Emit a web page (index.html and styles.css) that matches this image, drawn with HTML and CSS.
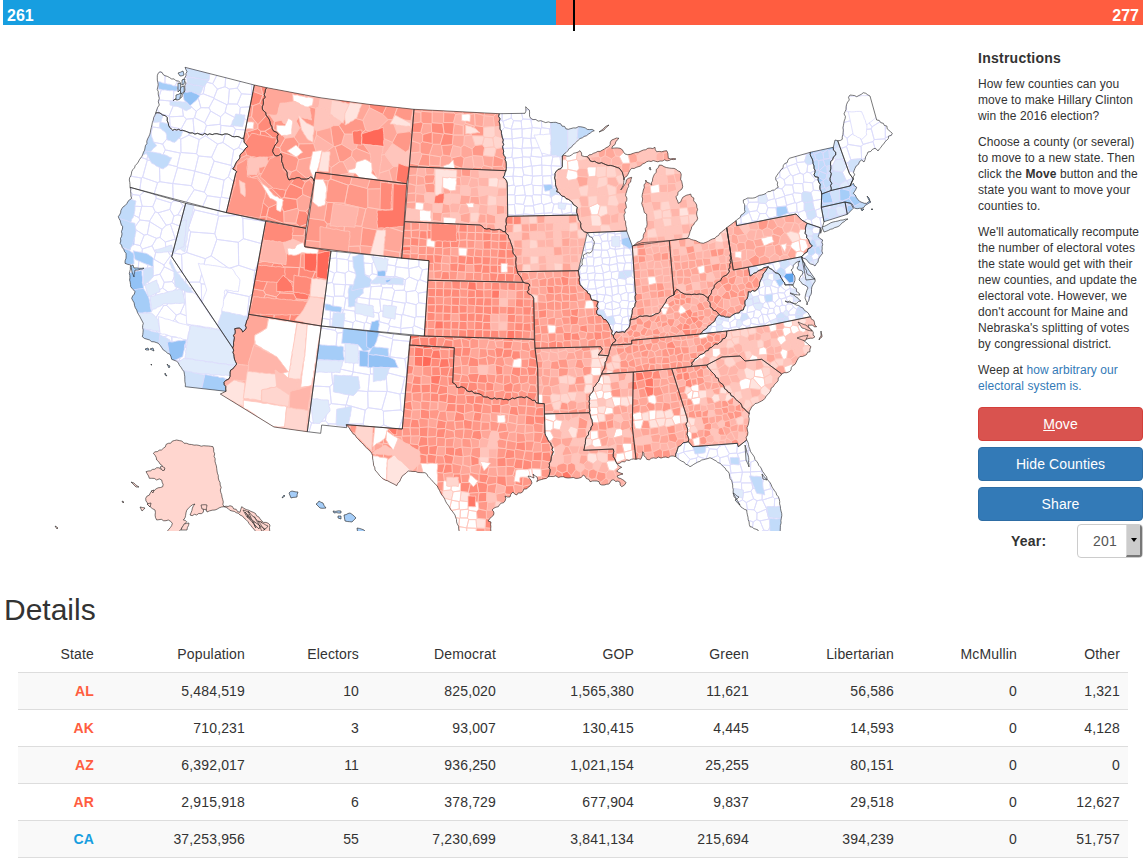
FILE: index.html
```html
<!DOCTYPE html>
<html lang="en">
<head>
<meta charset="utf-8">
<title>Electoral map</title>
<link rel="stylesheet" href="styles.css">
</head>
<body>
<header class="tally">
  <div class="tally-dem">261</div>
  <div class="tally-gop">277</div>
  <div class="tally-mid"></div>
</header>
<main class="top">
  <svg class="map" id="map" viewBox="0 31 970 500" width="970" height="500"></svg>
  <aside class="side">
    <h4>Instructions</h4>
    <p>How few counties can you<br>move to make Hillary Clinton<br>win the 2016 election?</p>
    <p>Choose a county (or several)<br>to move to a new state. Then<br>click the <b>Move</b> button and the<br>state you want to move your<br>counties to.</p>
    <p>We'll automatically recompute<br>the number of electoral votes<br>the state would get with their<br>new counties, and update the<br>electoral vote. However, we<br>don't account for Maine and<br>Nebraska's splitting of votes<br>by congressional district.</p>
    <p>Weep at <a>how arbitrary our<br>electoral system is.</a></p>
    <div class="buttons">
      <button class="btn btn-danger"><u>M</u>ove</button>
      <button class="btn">Hide Counties</button>
      <button class="btn">Share</button>
    </div>
    <div class="year">
      <b>Year:</b>
      <div class="select"><span>201</span><i class="arrow"></i></div>
    </div>
  </aside>
</main>
<section class="details">
  <h2>Details</h2>
  <table>
    <colgroup><col class="c1"><col class="c2"><col class="c3"><col class="c4"><col class="c5"><col class="c6"><col class="c7"><col class="c8"><col class="c9"></colgroup>
    <thead><tr><th>State</th><th>Population</th><th>Electors</th><th>Democrat</th><th>GOP</th><th>Green</th><th>Libertarian</th><th>McMullin</th><th>Other</th></tr></thead>
    <tbody>
      <tr><td class="gop">AL</td><td>5,484,519</td><td>10</td><td>825,020</td><td>1,565,380</td><td>11,621</td><td>56,586</td><td>0</td><td>1,321</td></tr>
      <tr><td class="gop">AK</td><td>710,231</td><td>3</td><td>93,007</td><td>130,415</td><td>4,445</td><td>14,593</td><td>0</td><td>4,128</td></tr>
      <tr><td class="gop">AZ</td><td>6,392,017</td><td>11</td><td>936,250</td><td>1,021,154</td><td>25,255</td><td>80,151</td><td>0</td><td>0</td></tr>
      <tr><td class="gop">AR</td><td>2,915,918</td><td>6</td><td>378,729</td><td>677,904</td><td>9,837</td><td>29,518</td><td>0</td><td>12,627</td></tr>
      <tr><td class="dem">CA</td><td>37,253,956</td><td>55</td><td>7,230,699</td><td>3,841,134</td><td>215,694</td><td>394,239</td><td>0</td><td>51,757</td></tr>
    </tbody>
  </table>
</section>
<script src="map.js"></script>
</body>
</html>
```
FILE: styles.css
```css
* { box-sizing: border-box; }
body { margin: 0; height: 867px; overflow: hidden; background: #fff; color: #333; font-family: "Liberation Sans", Arial, sans-serif; font-size: 14px; }
.tally { position: relative; display: flex; margin: 0 5px 0 3px; height: 25px; color: #fff; font-weight: bold; font-size: 16px; line-height: 31px; }
.tally-dem { width: 553px; padding-left: 4px; background: #179ee0; }
.tally-gop { flex: 1; padding-right: 4px; text-align: right; background: #ff5d40; }
.tally-mid { position: absolute; left: 570px; top: 0; width: 2px; height: 31px; background: #000; }
.top { display: flex; height: 565px; padding-top: 6px; }
.map { flex: none; display: block; }
.side { width: 165px; margin-left: 8px; padding-top: 19px; }
.side h4 { margin: 0 0 10px; font-size: 14px; line-height: 16px; letter-spacing: .25px; }
.side p { margin: 0 0 10px; font-size: 12px; line-height: 16px; letter-spacing: .08px; white-space: nowrap; }
.side a { color: #337ab7; }
.buttons { display: flex; flex-direction: column; gap: 6px; margin-top: 13px; }
.btn { height: 34px; padding: 0; border: 1px solid #2e6da4; border-radius: 4px; background: #337ab7; color: #fff; font: 14px "Liberation Sans", Arial, sans-serif; letter-spacing: .1px; }
.btn-danger { background: #d9534f; border-color: #d43f3a; }
.year { display: flex; justify-content: space-between; align-items: center; margin: 3px 0 0 33px; letter-spacing: .2px; }
.select { display: flex; width: 66px; height: 34px; border: 1px solid #ccc; border-radius: 4px; overflow: hidden; color: #555; line-height: 32px; }
.select span { flex: 1; padding-left: 15px; }
.arrow { display: flex; width: 16px; align-items: center; justify-content: center; background: #ccc; border-right: 2px solid #777; border-bottom: 2px solid #777; border-left: 1px solid #ddd; }
.arrow::before { content: ""; border: 3px solid transparent; border-top: 4px solid #000; border-bottom: 0; }
.details h2 { margin: 0 0 0 4px; font-size: 30px; font-weight: normal; line-height: 33px; padding-top: 3px; }
table { width: 1110px; margin: 10px 0 0 18px; border-collapse: separate; border-spacing: 0; table-layout: fixed; }
th, td { height: 37px; padding: 0 8px; text-align: right; font-weight: normal; line-height: 20px; letter-spacing: .15px; }
td { border-top: 1px solid #ddd; }
th { height: 36px; }
tbody tr:nth-child(odd) { background: #f9f9f9; }
tbody tr:last-child td { border-bottom: 1px solid #ddd; height: 38px; }
td.gop { color: #ff5d40; font-weight: bold; }
td.dem { color: #179ee0; font-weight: bold; }
.c1 { width: 84px; } .c2 { width: 151px; } .c3 { width: 114px; } .c4 { width: 137px; } .c5 { width: 138px; }
.c6 { width: 115px; } .c7 { width: 145px; } .c8 { width: 123px; } .c9 { width: 103px; }
.state { fill: none; stroke: #222; stroke-opacity: .6; stroke-width: 1; stroke-linejoin: round; }
.county-r { stroke: #ffc6bd; stroke-width: .8; }
.county-b { stroke: #dcdcfb; stroke-width: .85; }
```
FILE: map.js
```js
const RED = ['#fff', '#ffe4df', '#ffd6cf', '#ffc5bc', '#ffb5aa', '#ffa799', '#ff9888', '#ff8a79', '#ff7867', '#ff6858'];
const BLUE = ['#fff', '#e0ebfb', '#d0e2fa', '#c1dbfa', '#a5cdf8', '#93c2f5', '#5ea4ec'];

// Irregular borders, shared between neighbouring states.
const ARCS = {
  waCoast: '155.7,113 156.7,110 159.3,105 158.3,101.7 159.3,98.3 158.3,91.7 157.3,80 157.3,75.7 160,71.7 165,75.7 171.7,79 178.3,81 180.7,84.3 178,88 181,91.7 177,98 173,100.7 182,97 185,90 186,83 182.7,80 186,75.7 187,71.7 185,67.3',
  waOr: '243.7,138.3 230,135 217,133.7 200,134.3 190,133 182.7,130.3 176.7,130 172.7,130.3 170,127.7 168.3,123.3 167.3,117.7 162.7,115 160,113 155.7,113',
  orCoast: '155.7,113 153.3,120 150.7,130 145,148 140.7,158 131.7,171.7 129.3,180 130,187.3',
  orId: '235.7,173.3 236.7,171.7 232.7,169 236.7,161.7 243.3,151.7 247.7,146.7 244,142.3 243.7,138.3',
  idMt: '266.7,87.7 262.3,106.7 266,115 270,121.7 272.3,129 278.3,134.3 276.7,143.3 272.7,151.7 275.7,156 281,153.7 281.7,161.7 285.7,170 289,180 296.7,177.7 306.7,179 310.7,176.7 314,181',
  nvAz: '248.7,314.3 245,330 242.7,332 239.3,328 234.7,328.7 234,340 232.7,348',
  caCoast: '130,187.3 131.7,198.3 123.3,206.7 118.3,216.7 122.7,226.7 120,243.3 126,253.3 125,263.3 130.7,265 129.3,273.3 130.7,286.7 135,291.7 131.7,298.3 136.7,310 143.3,323.3 142.3,336.7 151.7,341.7 158.3,343.3 163.3,350 170,354.3 171.7,359.3 178.3,362.7 184,371.7 185.3,386.7',
  caAz: '226,391.3 224,382.3 230,376.7 230.7,370 236.7,364 234,356.7 232.7,348',
  ndMn: '499.3,113.7 500,126.7 503.3,140 503.3,153.3 506,161.7 506,170.7',
  sdMn: '506,170.7 503,177.3 507.3,183.3',
  sdIa: '507.7,216.3 506,221.7 505.3,231.7',
  sdNe: '505.3,231.7 499.3,229.3 486.7,229 480,225',
  neIa: '505.3,231.7 508.3,235 511.7,245 516,260 517.3,271.7',
  neMo: '517.3,271.7 523.3,282.3',
  ksMo: '523.3,282.3 530,285 527.3,291.7 533.7,298.3',
  redRiver: '452.7,382.7 456.7,387.3 463.3,387.3 466.7,390.7 476.7,393.3 483.3,396.7 496.7,399 508.3,400 516.7,397.7 526.7,396.7 538.3,403.3',
  txLa: '545,433.3 550.7,443.3 553.3,451.7 549.3,463.3 550,471.7 548.3,476.7',
  txCoast: '548.3,476.7 536.7,481.7 537,477 533,474 534,478 528,476 532,483 530,486 516.7,495 513,492 510,497 505,496 505,501 498.3,506.7 492,510 494,513 491.7,516.7 488,521 491,522 491,540',
  rio: '462,540 455,515 446.7,503.3 437.3,486 425,472.7 408.3,471 403.3,475 396.7,485.7 383.3,479 375,470 371.7,453.3 351.7,431.7 346.3,424.7',
  mnNorth: '525,113.3 525.7,106.7 529.3,110 530.7,118.3 543.3,121.7 558.3,123.3 568.3,129.3 578.3,126.7 594.3,130.7',
  mnShore: '594.3,130.7 578.3,140 562.3,156',
  mnWi: '562.3,166.7 555,173.3 556.7,191.7 568.3,199.3 577.3,207.3 577.7,215',
  iaWi: '577.7,215 580,221.7 582.3,230 587.3,232.7',
  iaIl: '587.3,232.7 594.3,241.7 591.7,251.7 583.3,255 582.3,265 578.3,270.7',
  wiNorth: '562.3,156 571.7,155 580,150.7 581.7,155.7 587.3,156.7',
  wiMi: '587.3,156.7 590,160.7 615,166.7 620.7,170 624,180',
  wiEast: '624,180 620.7,190 628.3,178.3 631.7,177.3 626,193.3 626,205 624,215 626.7,231',
  upCoast: '587.3,156.7 608.3,146.7 611.7,140 619,138.3 611.7,148.3 620,148.3 625,154 633.3,153.3 643.3,150 655,147.3 656.7,151.7 666.7,150.7 668.3,158.3 676,159 660,161 646.7,161.7 638.3,166.7 631.7,168.3 624,180',
  miCoast: '633.3,245.7 641.7,240 646.7,226.7 646.7,216.7 641.7,203.3 643.3,190 645.7,180 651.7,185 653.3,176.7 659.3,165 671.7,168.3 680,171.7 682.7,186.7 676,196.7 678.3,203.3 685,196 690.7,194 696.7,205 697.7,218.3 691.7,226.7 687.3,238.3',
  ilIn: '635.3,291.7 636,301.7 630,320',
  ilKy: '630,320 629.3,326.7 625,332.3 616,331.7 613.3,335.7',
  ilMo: '613.3,335.7 610,326.7 607.3,321.7 596.7,313.3 598.3,301.7 591.7,300 590,294.3 580,285 579,275 578.3,270.7',
  moKy: '613.3,335.7 616,340 611.7,345',
  moTn: '611.7,345 608.3,355.7',
  arTn: '608.3,355.7 605,365 601.7,374',
  arMs: '601.7,374 596.7,383.3 589.3,396.7 589.3,412.7',
  laMs: '589.3,412.7 592.7,425 586.7,436.7 583.7,450.3',
  laMs2: '613.3,449 613.3,456.7 617.3,464',
  laCoast: '617.3,464 621.7,467.3 616.7,471 623,474 617,476 626,482.7 621.7,486.7 618,481 611.7,480 609,484 601.7,485 597,481 590,481.7 583.3,475 578.3,478.3 563.3,476.7 548.3,476.7',
  gulf: '636,459.3 626.7,460 617.3,464',
  alGulf: '675.7,456.7 663.3,457.3 646.7,459.3 642.7,451.7 640.7,459.3 636,459.3',
  alGa: '686.7,416.7 686.7,426.7 688.3,441.7',
  alFl: '688.3,441.7 683.3,442.7 678.3,446.7 675.7,456.7',
  tnNc: '726.7,331 725,338.3 711.7,347.3 698.3,356.7 691.7,362.7 691,366.3',
  inKy: '630,320 640,316 651.7,316 660,311.7 666.7,299.3 674,295',
  ohKy: '674,295 676.7,289.3 686.7,294.3 701.7,294.3 708.3,298.3',
  kyWv: '708.3,298.3 710,306.7 719,314.6',
  kyVa: '719,314.6 711.7,323.3 700,334',
  ohWv: '730.7,253.3 729.3,271.7 718.3,281.7 711.7,290 708.3,298.3',
  ohCoast: '687.3,238.3 693.3,240 703.3,243.3 715,238.3 726.7,227.7',
  vaWv: '719,314.6 730,317.3 743.3,310 748.3,291.7 756.7,290 761.7,278.3 768.3,266.7',
  vaMd: '768.3,266.7 773.3,270.7 780,275 785,285 793,285',
  vaCoast: '793,285 800,295 790,293 801,301 796.7,303.3 785,301 803,308 806.7,311.7 810.7,316.7',
  wvMd: '750,276 760,270 768.3,266.7',
  gaSc: '706.7,365 713.3,373.3 726.7,390 738.3,401.7 749.3,414',
  gaCoast: '749.3,414 747.3,430 746.7,440',
  ncCoast: '810.7,316.7 816.7,326.7 808,325 815,336.7 803.3,340 811,346.7 810,351.7 798.3,358.3 789.3,371.7 781.7,374',
  scCoast: '781.7,374 773.3,386.7 765,398.3 751.7,406.7 749.3,414',
  flCoast: '746.7,440 751.7,453.3 765,475 778.3,496.7 781.7,513.3 780,540 763,540 758,530 750,526.7 746.7,510 741,507 734,496.7 732.7,485 728.3,471.7 720,463.3 710,457.7 701.7,460 690,466.7 675.7,456.7',
  eriePa: '726.7,227.7 736,220.7',
  nyLakes: '736,220.7 745,211.7 743.3,200 761.7,195 778.3,187.3 775.7,177.3 789.3,158.3',
  paNj: '807.3,223.3 805,233.3 812.3,245.7 805,253.3 801.7,256.7',
  njCoast: '820.3,227.7 818.3,236.7 822.7,240 822.7,253.3 815,266 803.3,258.3 801.7,256.7',
  nyVt: '810.3,152.3 814,168.3 815,176.7 818.3,177.3 821.7,194',
  vtNh: '833.3,147.3 835.7,155 830.7,161.7 831,190.5',
  meCoast: '853.3,179 855,168.3 861.7,160 864,162 868,152 875,148.3 878,151 885,141.7 892.3,133.3 883.3,123.3 876.7,120',
  meNorth: '870,96 863.3,92.7 856.7,96.7 850,95 845,111.7 842.3,139.3 837.7,140.7',
  maCoast: '853.3,179 850,186 853.3,183.3 856.7,187.3 853.3,193.3 860,201.7 866.7,203.3 870,200.7 867,196 871,202 861.7,208.3 855,208.3 850.7,203.3',
  mdBay: '793,285 795,278 791,270 797,262 800,261 797,268 803,272 799,280 808,288 805,298 807,305 814,283 815,279 808,275 801.7,256.7'
};

// ring | kind | cell size | jitter | base level | spread | share of white cells | spots "x,y,r,level"
const STATES = {
  WA: ['@waCoast 254.3,85 243.7,138.3 @waOr', 'b', 13, .5, 0, 0, 0, ''],
  OR: ['@waOr @orCoast 226.3,212.7 @orId', 'b', 17, .45, 0, 0, 0, ''],
  CA: ['@caCoast 226,391.3 @caAz 171.7,256.7 185.7,203.3', 'b', 13, .7, 0, 0, 0, ''],
  NV: ['185.7,203.3 265.7,221.3 @nvAz 171.7,256.7', 'b', 25, .4, 0, 0, 0, ''],
  ID: ['254.3,85 @idMt 306,228.3 226.3,212.7 @orId', 'r', 14, .8, 6.3, 2, 0, ''],
  MT: ['@idMt 315.7,172.3 406.7,183.7 409.3,166.7 414,109.3 370,104.5 320,97.7', 'r', 16, .8, 4.8, 3, 0, '400,170,14,7'],
  WY: ['315.7,172.3 406.7,183.7 401.7,258.3 304.7,246.7', 'r', 20, .35, 5.5, 1.6, 0, ''],
  UT: ['265.7,221.3 306,228.3 304.7,246.7 331,251 321.3,326 248.7,314.3', 'r', 15, .45, 6.4, 2, 0, ''],
  AZ: ['248.7,314.3 321.3,326 307.3,431.7 274,427 220.3,394 226,391.3 @caAz @nvAz<', 'r', 30, .5, 3, 1, 0, ''],
  CO: ['331,251 429,260.7 424.3,336 321.3,326', 'b', 12, .32, 0, 0, 0, ''],
  NM: ['321.3,326 410.7,335.7 402.3,429 346.3,424.7 346.7,427.7 321.7,425 320.7,433.3 307.3,431.7', 'b', 18, .35, 0, 0, 0, ''],
  ND: ['414,109.3 499.3,113.7 @ndMn 409.3,166.7', 'r', 10.5, .4, 5, 2, 0, '425,130,26,6 490,140,14,2.5'],
  SD: ['409.3,166.7 506,170.7 @sdMn 507.7,216.3 @sdIa @sdNe 404.7,221.7', 'r', 9, .3, 4, 2.4, .02, '425,177,14,6 465,180,10,5 495,190,12,2.6'],
  NE: ['404.7,221.7 480,225 @sdNe< @neIa @neMo 428,280.3 429,260.7 401.7,258.3', 'r', 8, .15, 6.4, 1.6, .01, ''],
  KS: ['428,280.3 523.3,282.3 @ksMo 534.3,339.3 424.3,336', 'r', 8, .12, 6.5, 1.6, .01, '500,322,9,4 505,300,9,4'],
  OK: ['410.7,335.7 534.3,339.3 535,348.3 537.7,368.3 538.3,403.3 @redRiver< 454.3,347.7 409.3,345', 'r', 8.5, .4, 6, 1.8, .01, '490,368,7,4 430,340,20,7.5'],
  TX: ['409.3,345 454.3,347.7 @redRiver 544.3,403.7 545,433.3 @txLa @txCoast @rio 402.3,429', 'r', 8.8, .3, 6.1, 1.9, 0, '440,370,16,7 425,355,14,7.5 450,515,14,.2 465,520,16,.4 455,495,13,.4 490,445,10,3.4 500,500,12,4 485,460,6,2 533,474,5,1.5 500,513,8,2.5 410,468,14,4.6 425,478,8,1'],
  MN: ['499.3,113.7 @mnNorth @mnShore @mnWi 507.7,216.3 @sdMn< @ndMn<', 'b', 9.5, .3, 0, 0, 0, ''],
  IA: ['507.7,216.3 577.7,215 @iaWi @iaIl 517.3,271.7 @neIa< @sdIa<', 'r', 8, .15, 3.6, 2, .02, '512,222,7,6.5 575,232,8,2.6'],
  WI: ['@wiNorth @wiMi @wiEast 587.3,232.7 @iaWi< @mnWi<', 'r', 9.5, .4, 3, 1.8, .04, '568,160,9,0 598,215,7,.5 582,175,8,4.4'],
  UP: ['@upCoast @wiMi<', 'r', 9, .5, 3.8, 2, 0, '622,158,6,0'],
  MI: ['@miCoast 669.3,240.7', 'r', 8.6, .2, 3.3, 1.8, .03, '684,215,7,1 670,222,6,1 655,175,12,4.2'],
  IL: ['587.3,232.7 626.7,231 632.3,246 635.3,291.7 @ilIn @ilKy @ilMo', 'b', 7.5, .45, 0, 0, 0, '603,312,4,2 610,321,4,2 601,265,3,1 625,275,4,2'],
  MO: ['517.3,271.7 578.3,270.7 @ilMo< @moKy @moTn 598.3,355 602.3,349.3 600.7,346.7 535,348.3 533.7,298.3 @ksMo< @neMo<', 'r', 7.8, .35, 5.7, 1.8, .01, '593,304,4,0 567,301,4,0 537,300,4,1'],
  AR: ['535,348.3 600.7,346.7 602.3,349.3 598.3,355 608.3,355.7 @arTn @arMs 544.3,414 544.3,403.7 538.3,403.3 537.7,368.3', 'r', 8.3, .4, 4.8, 2, .02, '597,362,10,.6 589,385,7,.8 570,382,7,1 560,397,10,3 580,400,9,2.6'],
  LA: ['544.3,414 589.3,412.7 @laMs 613.3,449 @laMs2 @laCoast @txLa<', 'r', 8.6, .6, 4.3, 2.6, .05, '552,422,7,0 570,425,10,2.4 598,460,7,1.5 560,472,12,6.5'],
  MS: ['601.7,374 633.3,372 632.3,426.7 636,459.3 @gulf @laMs2< 583.7,450.3 @laMs< @arMs<', 'r', 7.8, .4, 4.3, 2.6, .08, '598,390,14,.3 597,410,13,.3 592,438,9,.3 605,380,6,1 606,402,6,2 628,400,6,.8'],
  AL: ['633.3,372 671.7,368.7 686.7,416.7 @alGa @alFl @alGulf 632.3,426.7', 'r', 8, .4, 5, 2.2, .02, '648,375,13,6.6 643,385,10,7 640,417,8,.3 655,422,9,.3 670,421,8,.5 684,418,7,.6 645,440,8,2 654,396,5,0'],
  GA: ['671.7,368.7 706.7,365 @gaSc @gaCoast 738.3,446.7 737.3,443.3 692.7,446.7 @alGa< 686.7,416.7', 'r', 6.6, .5, 4.7, 2.4, .05, '693,388,8,.2 700,392,4,.2 717,398,6,.6 692,425,7,1 725,395,6,2 740,420,5,2 685,378,12,5.6'],
  FL: ['688.3,441.7 692.7,446.7 737.3,443.3 738.3,446.7 746.7,440 @flCoast @alFl<', 'b', 10, .5, 0, 0, 0, ''],
  TN: ['611.7,345 631.7,344 631.7,340.3 700,334 726.7,331 @tnNc 671.7,368.7 633.3,372 601.7,374 @arTn< @moTn<', 'r', 7, .5, 5.4, 1.8, .01, '652,348,3,0 611,368,7,1.6 620,360,5,3'],
  KY: ['@inKy @ohKy @kyWv @kyVa 631.7,340.3 631.7,344 611.7,345 @moKy< @ilKy<', 'r', 6.2, .7, 5, 2, .01, '690,322,12,6.4 682,310,3,0 664,308,3,1'],
  IN: ['632.3,246 641.7,242.7 669.3,240.7 674,295 @inKy< @ilIn<', 'r', 7.4, .25, 4.8, 2, .02, '636,252,5,1 653,280,3,0 650,291,3,0'],
  OH: ['669.3,240.7 @ohCoast 730.7,253.3 @ohWv @ohKy<', 'r', 7.4, .3, 4.4, 2, .04, '722,235,7,2 699,270,3,0 712,280,4,1.5'],
  WV: ['726.7,227.7 733.3,270 748.3,267.3 @wvMd @vaWv< @kyWv< @ohWv<', 'r', 7.4, .7, 5.3, 1.8, 0, ''],
  PA: ['726.7,227.7 736,220.7 736.7,225.7 796,214 801.7,220 @paNj 733.3,270', 'r', 9, .6, 4.4, 1.6, .01, '800,237,9,1.4 800,249,7,.6 795,222,4,0 762,225,6,6 760,255,10,5.3'],
  NY: ['@nyLakes 810.3,152.3 @nyVt 821.3,207.3 824,221.7 820.7,233.3 820.3,227.7 807.3,223.3 801.7,220 796,214 736.7,225.7', 'b', 9.5, .5, 0, 0, 0, '780,208,4,4 748,210,6,2 781,197,4,2 812,198,5,2 810,213,6,2 806,160,5,2 760,199,4,1'],
  NJ: ['@njCoast @paNj<', 'b', 6.5, .6, 1.4, 2.4, 0, '819,235,4,3'],
  VT: ['@nyVt 831,190.5 @vtNh<', 'b', 7, .6, 3, 1.8, 0, ''],
  NH: ['833.3,147.3 835,140 837.7,140.7 849.3,173.3 853.3,179 850,186 831,190.5 @vtNh<', 'b', 11, .6, .8, 2.4, 0, ''],
  ME: ['853.3,179 @meCoast 870,96 @meNorth 849.3,173.3', 'b', 13, .5, 0, 0, 0, '854,166,5,2 876,140,5,2'],
  MA: ['821.7,194 831,190.5 850,186 @maCoast 845,202 821.3,207.3', 'b', 10, .5, 3.4, 1.6, 0, ''],
  CT: ['821.3,207.3 845,202 847.3,214.3 824,221.7', 'b', 8, .5, 2, 2.2, 0, ''],
  RI: ['845,202 850.7,203.3 853.3,208.3 847.3,214.3', 'b', 6, .5, 3, 1, 0, ''],
  MD: ['748.3,267.3 801.7,256.7 @mdBay< @vaMd< @wvMd<', 'b', 8, .6, 1, 2.4, 0, '786,276,5,6 782,270,5,4 752,271,5,0'],
  DE: ['801.7,256.7 803.3,262 815,279 806,280', 'b', 10, .4, 1, 2, 0, ''],
  VA: ['700,334 726.7,331 770,325 810.7,316.7 @vaCoast< @vaMd< @vaWv< @kyVa', 'b', 6.6, .7, .2, 1, 0, '767,296,3,3 783,318,5,2 743,317,3,2 783,281,5,4 800,311,6,2 776,276,4,2'],
  NC: ['726.7,331 770,325 810.7,316.7 @ncCoast 761.7,359.3 745,361 740,356 722,357 706.7,365 691,366.3 @tnNc<', 'r', 7.4, .5, 3.3, 2, .1, '790,328,7,.6 803,322,5,1 715,350,4,0 760,343,6,2.5'],
  SC: ['706.7,365 722,357 740,356 745,361 761.7,359.3 781.7,374 @scCoast @gaSc<', 'r', 9, .6, 2.8, 1.6, .05, '755,376,10,.3 745,387,7,.3 763,385,6,.2 768,395,5,.4 728,375,8,3.6'],
  AK: ['~176.7,440 168.3,443.3 163.3,448.3 153.3,453.3 156.7,460 165,470 156.7,467.7 146,471.7 149.3,478.3 161.7,480 162.7,486.7 151.7,491 145.7,498.3 148.3,505 155,510 156.7,520 168.3,520 172.3,523.3 166,535 177.3,533 186.7,521.7 183.3,520 188.3,508.3 195,504 190,515 196.7,515 203.3,512.3 204,507 207,512 215,510 224,506.7 232,511 240,515 248,521.7 258,535 270,535 270,525 261.7,520.7 253.3,512.3 241.7,506.7 240,512.3 230,505.7 224,506.7 213,446.7 196.7,445 186.7,443.3 176.7,440', 'r', 900, 0, 2, 0, 0, '']
};

// County patches drawn in thirds of a unit from an origin: [state, level, points]
const PATCHES = [
  [110, 55, [
    ['WA', 2, '225,37 300,56 297,75 232,66'], ['WA', 2, '230,66 297,75 280,95 232,86'], ['WA', 2, '228,86 280,95 270,118 225,108'], ['WA', 5, '218,112 245,110 270,122 258,137 240,152 222,135'],
    ['WA', 4, '145,80 205,95 200,108 145,103'], ['WA', 2, '180,138 230,142 245,157 230,167 205,155 180,150'], ['WA', 2, '377,177 405,180 398,215 362,212 372,192'],
    ['OR', 3, '150,200 175,208 185,226 220,228 210,248 195,262 172,255 168,235 148,216'], ['OR', 3, '122,232 130,260 140,272 120,290 92,302 108,265'], ['OR', 3, '105,288 150,295 185,308 175,330 160,342 125,325'], ['OR', 2, '137,174 158,180 153,200 130,202'],
    ['CA', 3, '58,430 78,438 72,480 55,517 30,525 20,485 40,450'], ['CA', 4, '38,517 75,518 72,570 20,570'], ['NV', 1, '227,445 252,450 238,510 225,590 205,580 195,560'],
    ['ID', 7, '425,235 500,250 490,305 440,308 410,300 400,270 410,255'], ['ID', 6, '380,330 412,310 412,365 440,370 470,400 450,490 349,473 375,390'], ['ID', 3, '416,310 472,306 474,333 448,337 440,360 412,358'], ['ID', 2, '388,376 405,385 405,425 392,415'], ['ID', 0, '452,383 475,400 490,420 520,435 512,470 500,465 500,440 480,430'], ['ID', 0, '410,200 432,202 430,222 408,222'], ['ID', 6, '480,310 510,300 520,345 550,375 530,405 490,400 450,365'],
    ['MT', 5, '470,98 548,112 552,145 510,150 500,180 468,180 458,155'], ['MT', 0, '548,118 610,130 606,152 580,160 568,145 550,138'], ['MT', 3, '510,145 550,140 600,160 605,195 565,185 550,210 520,205 505,175'], ['MT', 0, '500,210 525,212 535,190 548,198 545,238 515,242 500,228'], ['MT', 1, '565,180 590,205 612,215 608,262 590,250 575,225'], ['MT', 0, '532,288 558,270 578,292 558,306'], ['MT', 0, '608,290 636,286 630,320 612,375 598,340'], ['MT', 1, '636,290 660,290 655,350 625,348'],
    ['WY', 0, '614,372 640,373 650,400 645,450 625,455 608,440'],
    ['UT', 7, '467,499 550,515 545,560 455,580'] ]],
  [110, 220, [
    ['CA', 3, '25,-5 75,10 78,35 70,65 60,90 28,80'], ['CA', 4, '28,80 55,90 72,100 72,132 40,135'], ['CA', 4, '70,92 108,100 130,115 130,140 98,128 75,118'], ['CA', 5, '55,160 95,150 100,210 75,212 55,200'], ['CA', 2, '100,145 130,140 130,170 100,200'], ['CA', 1, '105,195 140,180 150,215 115,230'], ['CA', 4, '58,212 100,205 115,230 125,275 78,280 58,240'], ['CA', 1, '120,230 215,205 225,250 160,252 125,272'], ['CA', 1, '80,278 125,280 145,300 150,335 95,325'], ['CA', 0, '145,290 240,318 232,360 150,340'], ['CA', 3, '95,325 150,340 148,375 90,360'], ['CA', 2, '150,345 180,360 180,410 145,380'], ['CA', 5, '172,367 228,360 218,410 185,425 178,400'], ['CA', 1, '242,316 330,330 370,384 382,432 378,437 225,415 232,360'], ['CA', 1, '222,415 378,437 362,467 222,458 200,430'], ['CA', 2, '215,450 285,465 275,506 222,505'], ['CA', 4, '285,463 345,475 352,518 275,506'], ['CA', 2, '182,118 200,155 250,216 232,218 195,200 190,150 178,130'], ['CA', 1, '135,90 185,75 190,95 140,98'], ['CA', 0, '225,215 255,220 330,328 230,312'],
    ['NV', 2, '333,272 414,290 400,336 388,324 374,326 368,384 322,325'], ['NV', 1, '210,0 230,0 222,80 200,90 185,110'], ['NV', 0, '265,130 365,145 390,180 385,215 345,210 335,280 320,320 275,250 290,210'],
    ['UT', 4, '462,60 530,68 528,134 450,122'], ['UT', 3, '520,68 548,58 575,70 550,105 528,100'], ['UT', 7, '440,135 525,142 525,190 432,182'], ['UT', 6, '430,230 600,245 595,285 416,283'], ['UT', 7, '552,165 605,175 600,225 550,215'], ['UT', 9, '583,97 622,100 618,155 583,150'], ['UT', 9, '622,100 660,92 652,178 620,172'], ['UT', 1, '605,175 654,180 650,235 600,230'], ['UT', 2, '600,230 648,235 632,320 555,300 580,270'], ['UT', 0, '532,85 555,85 560,75 580,68 585,82 625,88 622,102 575,98 560,105 535,105'], ['UT', 8, '500,190 520,165 545,190 550,215 500,215'],
    ['AZ', 5, '410,280 476,295 470,325 435,345 432,375 415,437 365,430 365,325'], ['AZ', 0, '476,295 562,308 555,350 535,475 500,440 490,405 435,372 435,345 470,325'], ['AZ', 1, '562,308 592,313 585,400 572,478 535,475 548,390'], ['AZ', 0, '592,313 634,318 605,498 572,502 575,470 585,400'], ['AZ', 4, '432,375 470,395 500,410 535,455 500,465 465,462 415,455 415,430'], ['AZ', 4, '365,430 415,437 410,482 380,480 340,505 335,480'], ['AZ', 1, '372,480 405,490 400,560 320,520'], ['AZ', 1, '412,455 500,462 500,500 455,510 455,542 400,535'], ['AZ', 3, '495,450 535,475 560,480 565,510 535,525 500,500'], ['AZ', 2, '455,510 500,500 540,525 535,560 455,545'], ['AZ', 0, '400,540 530,560 525,620 490,620 400,562'], ['AZ', 4, '540,515 605,496 594,572 538,565'], ['AZ', 2, '530,562 595,572 588,640 523,625'] ]],
  [320, 280, [
    ['NM', 4, '70,140 175,158 160,205 130,215 115,195 65,190'], ['NM', 5, '140,140 180,150 172,175 160,210 140,200'], ['NM', 4, '-30,192 70,200 72,242 -30,238'], ['NM', 1, '-30,240 70,242 60,278 -30,275'], ['NM', 1, '75,190 115,195 115,250 75,248'], ['NM', 5, '118,212 145,215 145,262 118,258'], ['NM', 5, '145,222 205,230 225,240 235,263 145,262'], ['NM', 4, '158,200 205,205 205,230 145,222'], ['NM', 2, '160,262 210,263 195,300 160,305'], ['NM', 2, '42,285 115,290 120,325 100,347 40,335'], ['NM', 2, '50,388 95,378 85,440 48,435'], ['NM', 1, '-30,355 25,360 30,393 0,430 -20,430'],
    ['CO', 3, '90,15 130,10 130,40 105,60 115,80 85,80 85,30'], ['CO', 1, '105,68 160,78 162,112 105,100'], ['CO', 4, '15,72 65,82 62,98 15,90'], ['CO', 2, '40,98 75,100 70,145 35,140'], ['CO', 1, '190,75 230,80 225,118 188,110'], ['CO', 5, '155,125 178,120 175,160 148,155'],
    ['TX', 2, '110,436 160,440 155,512 105,465'], ['TX', 0, '165,438 205,445 195,475 158,500'], ['TX', 0, '200,452 240,480 220,512 198,480'], ['TX', 3, '235,475 300,515 300,550 270,580 222,525 150,522 195,495 220,512'], ['TX', 0, '150,525 202,535 200,602 155,580'], ['TX', 1, '202,540 222,525 272,572 230,627 200,600'], ['TX', 0, '302,550 352,550 352,630 310,580'], ['TX', 2, '380,592 415,592 415,620 380,618'], ['TX', 8, '444,648 467,648 467,680 444,680'], ['TX', 0, '588,570 625,568 632,590 600,592 600,607 582,605'], ['TX', 0, '480,543 512,550 492,572'], ['TX', 0, '450,585 475,603 460,620 445,605'], ['TX', 0, '532,405 555,405 555,428 532,428'], ['TX', 8, '203,445 232,446 230,464 218,462'] ]],
  [320, 90, [
    ['CO', 3, '98,500 130,490 135,555 155,570 150,590 95,602 108,555 100,530'], ['CO', 1, '155,500 205,508 200,545 172,543'], ['CO', 5, '172,543 197,543 195,560 172,558'], ['CO', 2, '195,562 250,565 250,585 150,580 170,560'], ['CO', 5, '195,570 215,568 200,580'],
    ['MT', 9, '125,132 190,112 192,170 125,162'], ['MT', 8, '97,125 125,120 125,165 100,162'], ['MT', 2, '35,30 90,42 70,100 30,72'], ['MT', 1, '90,38 125,42 110,85 75,105 75,70'], ['MT', 1, '225,76 272,100 272,110 210,102'], ['MT', 4, '130,162 190,170 175,265 155,235 150,190'], ['MT', 0, '85,240 105,235 108,218 135,208 155,220 155,250 175,268 120,265 105,250 85,248'], ['MT', 8, '235,220 270,232 260,283 228,272'],
    ['WY', 4, '40,340 115,352 105,412 30,408'], ['WY', 7, '182,276 218,280 212,360 180,358'], ['WY', 8, '220,281 262,284 252,410 172,415 172,360 218,360'], ['WY', 1, '170,420 197,420 190,500 150,495'], ['WY', 5, '0,410 90,425 85,490 0,480'],
    ['SD', 1, '345,237 410,240 410,265 368,262 365,315 345,315'], ['SD', 0, '368,262 410,264 408,300 390,302 368,292'], ['SD', 0, '298,360 333,362 333,395 298,392'], ['SD', 0, '370,382 408,384 408,402 370,402'], ['SD', 8, '345,318 373,308 370,340 342,340'], ['SD', 0, '438,340 462,340 462,352 445,352'], ['SD', 3, '260,355 298,360 298,392 258,390'],
    ['ND', 0, '370,228 388,222 400,210 405,240 372,238'], ['ND', 0, '425,72 450,72 450,95 425,92'], ['ND', 1, '437,105 465,115 480,128 437,132'],
    ['NE', 7, '333,400 410,403 410,455 333,452'], ['NE', 8, '247,470 272,470 272,483 247,483'], ['NE', 0, '543,520 562,520 562,547 543,547'] ]],
  [500, 90, [
    ['MN', 2, '152,90 203,110 203,180 187,200 152,195'], ['MN', 1, '203,115 235,108 232,150 203,185'], ['MN', 3, '235,105 290,118 240,148 232,145'], ['MN', 0, '102,135 152,132 152,195 125,190'], ['MN', 4, '130,284 155,284 160,300 135,304'], ['MN', 1, '175,338 200,340 195,358 175,355'], ['MN', 2, '150,300 170,290 175,310 150,322'],
    ['IL', 4, '365,440 390,440 400,470 390,478 365,462'], ['IL', 2, '362,425 382,420 388,440 365,445'], ['IL', 1, '335,440 360,440 360,470 335,468'] ]],
  [690, 80, [
    ['PA', 0, '213,475 245,468 252,485 222,497'], ['PA', 0, '135,515 155,515 155,535 135,532'], ['PA', 0, '272,495 290,490 285,517'],
    ['ME', 0, '475,95 512,88 530,120 530,165 515,178 490,165'], ['ME', 0, '467,50 545,45 560,110 530,135 515,95 470,95'] ]],
  [660, 230, [
    ['FL', 3, '97,645 138,645 135,668 105,672'], ['FL', 3, '210,683 238,683 238,705 212,702'], ['FL', 3, '268,738 305,740 314,795 290,790'], ['FL', 1, '220,775 250,780 248,805 215,795'], ['FL', 2, '320,830 370,830 370,865 325,862'], ['FL', 3, '328,865 372,867 372,910 330,905'] ]]
];

const ISLANDS = [
  ['b', 4, '289,493 292,491 298,492 297,497 291,498'], ['b', 4, '282,498 284,495 285,496'], ['b', 4, '316,504 319,501 323,503 326,508 320,508'], ['b', 4, '333,511 341,511 341,513 334,513'], ['b', 4, '338,516 341,516 341,519 338,518'], ['b', 4, '344,515 350,513 356,518 352,522 345,521'], ['b', 4, '357,528 364,530 370,536 358,535'],
  ['r', 2, '131,482 134,483 139,487 136,487'], ['r', 2, '122,501 124,502 123,503'], ['r', 2, '140,507 145,508 142,511'], ['r', 2, '55,526 58,528 57,529'], ['r', 2, '181,530 184,524 189,523 187,530'], ['r', 2, '599,132 605,127 609,125 604,130'],
  ['r', 2, '243,510 250,513 247,517'], ['r', 2, '247,517 255,517 254,523'], ['r', 2, '252,522 262,522 259,529'], ['r', 2, '258,521 268,526 262,532'], ['r', 2, '245,512 252,520 256,528 250,519'], ['r', 2, '250,515 258,524 265,530 256,519'],
  ['r', 2, '248,511 254,517 260,526 252,520'], ['r', 2, '151,491 154,490 153,493'], ['r', 2, '147,504 151,503 150,507'], ['r', 2, '162,466 165,468 163,471 160,467'], ['r', 2, '201,505 207,505 206,510 202,509'],
  ['b', 4, '145,349 148,348 149,350 146,350'], ['b', 4, '150,349 153,348 154,351'], ['b', 4, '167,364 170,366 169,368'], ['b', 4, '165,373 167,376 165,375'], ['b', 4, '151,364 152,365 151,365'],
  ['b', 1, '822,227 833,222 848,219 837,227 824,232'], ['b', 4, '861,209 864,209 862,211'], ['b', 4, '871,209 873,209 872,210'],
  ['b', 3, '178,73 183,71 184,75 180,76'], ['b', 3, '180,88 184,86 184,92 181,94'], ['b', 3, '176,95 181,93 180,99 176,100'], ['b', 3, '182,80 185,79 184,84 182,85'], ['b', 3, '178,83 181,84 180,90 178,92'],
  ['b', 4, '131,266 133,265 134,268 144,268 143,269 135,270 134,277 132,272'],
  ['r', 3, '821,331 822,337 819,340 821,336'], ['r', 3, '798,322 806,325 812,331 802,328'], ['r', 3, '797,338 808,335 805,341'],
  ['b', 1, '745,445 748,455 749,467 746,460'], ['b', 1, '762,474 767,480 763,479'], ['b', 1, '733,493 739,497 735,500 740,505'], ['r', 0, '650,167 651,170 649,169']
];

const NS = 'http://www.w3.org/2000/svg';
const svg = document.getElementById('map');
const el = (parent, name, attrs) => {
  const node = document.createElementNS(NS, name);
  for (const key in attrs) node.setAttribute(key, attrs[key]);
  return parent.appendChild(node);
};
const rnd = (a, b, c) => {
  const v = Math.sin(a * 127.1 + b * 311.7 + c * 74.7) * 43758.5453;
  return v - Math.floor(v);
};
const parse = s => s.trim().split(/\s+/).map(p => p.split(',').map(Number));
const toPath = pts => 'M' + pts.map(p => p[0].toFixed(1) + ',' + p[1].toFixed(1)).join('L') + 'Z';

function roughen(pts, amp) {
  const out = [pts[0]];
  for (let i = 1; i < pts.length; i++) {
    const [ax, ay] = pts[i - 1], [bx, by] = pts[i];
    const len = Math.hypot(bx - ax, by - ay);
    const n = Math.max(1, Math.round(len / 2.4));
    for (let k = 1; k < n; k++) {
      const d = (rnd(ax + k, by, i) - .5) * 2 * amp;
      out.push([ax + (bx - ax) * k / n - (by - ay) / len * d, ay + (by - ay) * k / n + (bx - ax) / len * d]);
    }
    out.push([bx, by]);
  }
  return out;
}

const SMOOTH = ['orCoast', 'caCoast', 'flCoast', 'ohCoast', 'mnShore', 'rio'];
const arcs = {};
for (const name in ARCS) arcs[name] = roughen(parse(ARCS[name]), SMOOTH.includes(name) ? .5 : .9);

function ring(text) {
  if (text[0] === '~') return roughen(parse(text.slice(1)), .8);
  const pts = [];
  for (const tok of text.split(' ')) {
    if (tok[0] !== '@') { pts.push(tok.split(',').map(Number)); continue; }
    let arc = arcs[tok.replace(/[@<]/g, '')].slice();
    if (tok.endsWith('<')) arc.reverse();
    else if (pts.length) {
      const last = pts[pts.length - 1], end = arc[arc.length - 1];
      const dist = p => Math.hypot(p[0] - last[0], p[1] - last[1]);
      if (dist(end) < .1) arc.reverse();
    }
    pts.push(...arc);
  }
  return pts;
}

// Part of a polygon that lies nearer to p than to q.
function nearer(poly, p, q) {
  const nx = q[0] - p[0], ny = q[1] - p[1];
  const lim = (q[0] * q[0] + q[1] * q[1] - p[0] * p[0] - p[1] * p[1]) / 2;
  const out = [];
  poly.forEach((a, i) => {
    const b = poly[(i + 1) % poly.length];
    const da = a[0] * nx + a[1] * ny - lim, db = b[0] * nx + b[1] * ny - lim;
    if (da <= 0) out.push(a);
    if (da * db < 0) {
      const t = da / (da - db);
      out.push([a[0] + (b[0] - a[0]) * t, a[1] + (b[1] - a[1]) * t]);
    }
  });
  return out;
}

const groups = {};
const outlines = [];
const defs = el(svg, 'defs', {});
Object.keys(STATES).forEach((id, index) => {
  const [text, kind, size, jitter, base, spread, white, spotText] = STATES[id];
  const pts = ring(text);
  const d = toPath(pts);
  const pal = kind === 'r' ? RED : BLUE;
  el(el(defs, 'clipPath', { id: 'clip-' + id }), 'path', { d });
  const g = groups[id] = el(svg, 'g', { 'clip-path': `url(#clip-${id})`, class: 'county-' + kind });
  g.palette = pal;
  outlines.push(d);
  el(g, 'path', { d, fill: pal[Math.round(base)] || '#fff' });
  if (size > 500) return;
  const xs = pts.map(p => p[0]), ys = pts.map(p => p[1]);
  const x0 = Math.min(...xs), x1 = Math.max(...xs), y0 = Math.min(...ys), y1 = Math.max(...ys);
  const cx = (x0 + x1) / 2, cy = (y0 + y1) / 2;
  const ang = -(cx - 510) * .045 * Math.PI / 180, co = Math.cos(ang), si = Math.sin(ang);
  const n = Math.ceil(Math.hypot(x1 - x0, y1 - y0) / 2 / size) + 1;
  const seed = (i, j) => {
    const shift = jitter < .46 ? 0 : (rnd(j, index, 9) - .5) * .5;
    const u = (i + shift + (rnd(i, j, index) - .5) * jitter) * size;
    const v = (j + (rnd(i, j, index + 60) - .5) * jitter) * size;
    return [cx + u * co - v * si, cy + u * si + v * co];
  };
  const spots = spotText ? spotText.split(' ').map(s => s.split(',').map(Number)) : [];
  const byFill = {};
  for (let i = -n; i <= n; i++) for (let j = -n; j <= n; j++) {
    const p = seed(i, j);
    if (p[0] < x0 - size || p[0] > x1 + size || p[1] < y0 - size || p[1] > y1 + size) continue;
    let poly = [[-2, -2], [2, -2], [2, 2], [-2, 2]].map(c => [p[0] + c[0] * size, p[1] + c[1] * size]);
    for (let a = -2; a <= 2; a++) for (let b = -2; b <= 2; b++) if (a || b) poly = nearer(poly, p, seed(i + a, j + b));
    if (poly.length < 3) continue;
    let level = base, w = white;
    for (const s of spots) if (Math.hypot(p[0] - s[0], p[1] - s[1]) < s[2]) { level = s[3]; w = 0; }
    const local = level < 1 && base > 1 ? .9 : spread;
    level += (rnd(i, j, index + 200) - .5) * local * 1.3;
    if (rnd(i, j, index + 400) < w) level = 0;
    const fill = pal[Math.max(0, Math.min(pal.length - 1, Math.round(level)))];
    byFill[fill] = (byFill[fill] || '') + toPath(poly);
  }
  for (const fill in byFill) el(g, 'path', { d: byFill[fill], fill });
});

for (const [ox, oy, list] of PATCHES) {
  for (const [id, level, text] of list) {
    const pts = parse(text).map(p => [ox + p[0] / 3, oy + p[1] / 3]);
    el(groups[id], 'path', { d: toPath(roughen(pts, .4)), fill: groups[id].palette[level] });
  }
}
for (const d of outlines) el(svg, 'path', { d, class: 'state' });
for (const [kind, level, text] of ISLANDS) {
  const d = toPath(roughen(parse(text), .4));
  el(svg, 'path', { d, fill: (kind === 'r' ? RED : BLUE)[level] });
  el(svg, 'path', { d, class: 'state' });
}
```
